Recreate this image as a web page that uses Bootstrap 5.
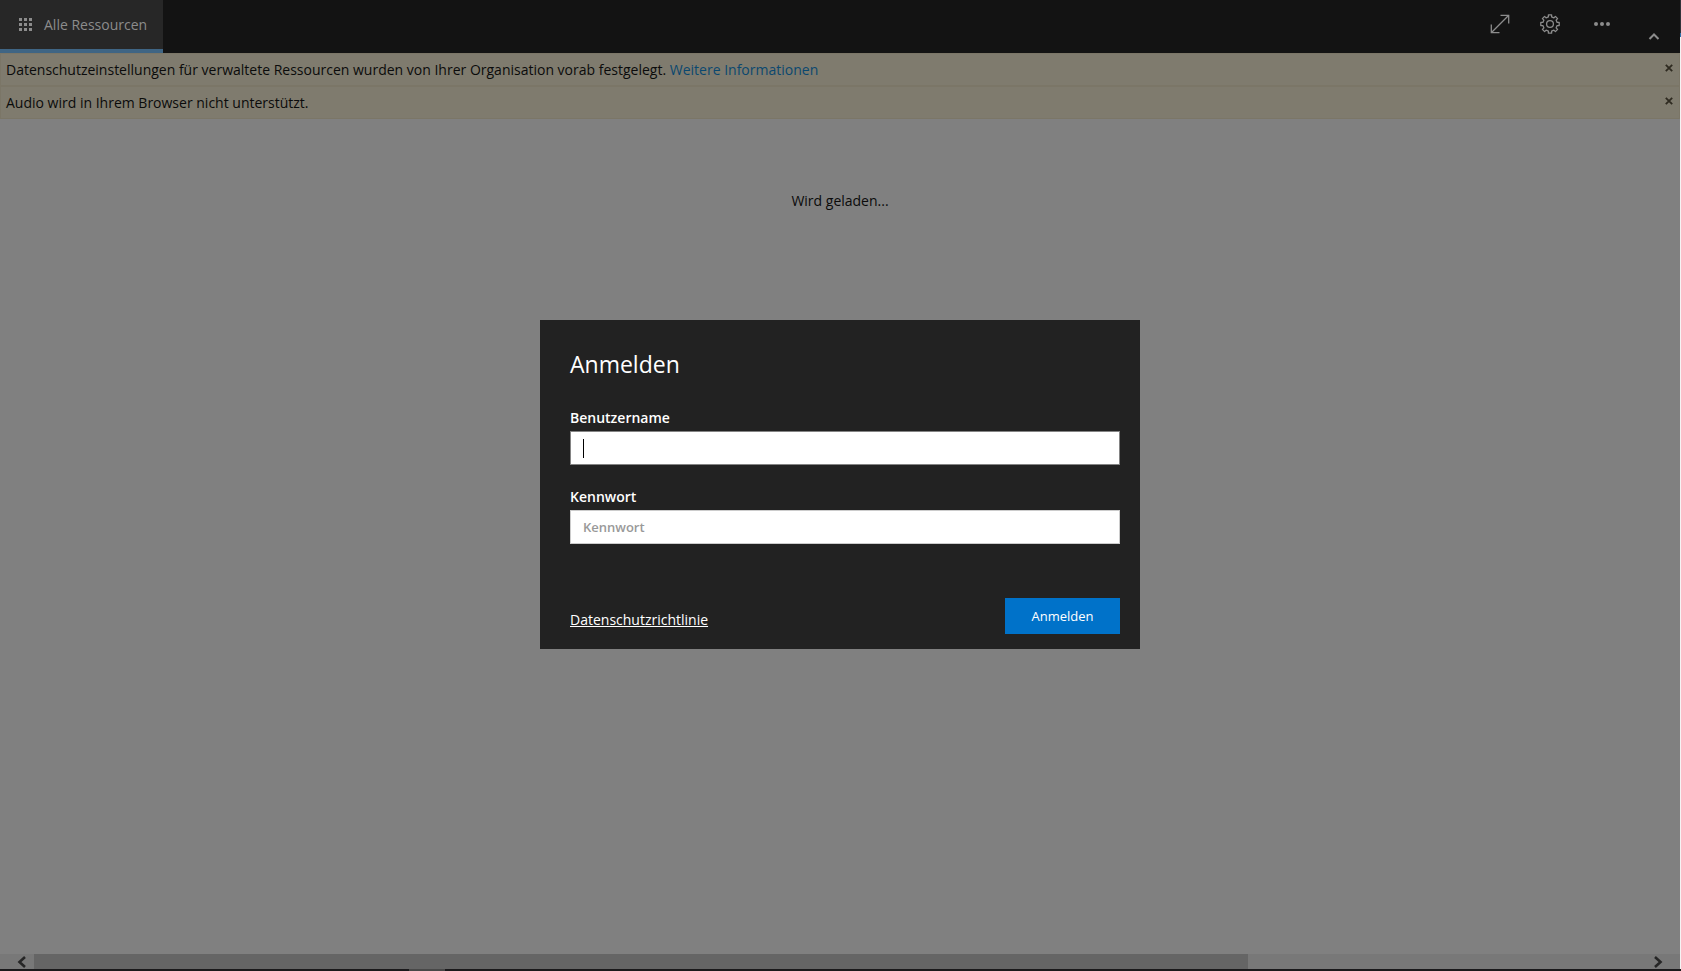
<!DOCTYPE html>
<html lang="de">
<head>
<meta charset="utf-8">
<meta name="viewport" content="width=device-width, initial-scale=1">
<title>Alle Ressourcen</title>
<link href="https://cdn.jsdelivr.net/npm/bootstrap@5.3.0/dist/css/bootstrap.min.css" rel="stylesheet">
<style>
  body { font-family: "Open Sans", "Noto Sans", sans-serif; font-size: 14px; line-height: 20px; color: #0b0b0b; background: #808080; }
  .app-shell { min-height: 100vh; }
  .window-edge { width: 1px; background: linear-gradient(#30343a 33px, #2f6fa8 33px 37px, #f4f4f4 37px); }
  .top-bar { height: 53px; background: #131313; color: #8c8c8c; }
  .top-tab { gap: 12px; padding: 0 16px 0 19px; color: #8c8c8c; background: #272727; border-bottom: 4px solid #3f6584; }
  .tool-btn { padding: 0; border: 0; background: none; color: #8c8c8c; line-height: 0; }
  .tools { gap: 30px; padding: 0 20px 5px 0; }
  .notice { height: 33px; padding: 1px 6px 0 5px; background: #7f7b6e; border: 1px solid #7b7667; border-radius: 0; }
  .notice a { color: #0b486f; text-decoration: none; }
  .notice button { color: #2e2a20; margin-bottom: 4px; }
  .loading { padding-top: 72px; }
  .scroll-track { height: 15px; background: #787878; color: #262626; }
  .scroll-thumb { width: 75.3%; background: #656565; }
  .scroll-end { width: 34px; padding: 0; border: 0; background: none; line-height: 0; color: inherit; text-align: right; }
  .task-edge { height: 2px; background: #1a191b; }
  .task-edge div { width: 36px; margin-left: 409px; background: #484848; }
  .sign-in { width: 600px; padding: 29px 20px 15px 30px; color: #fff; background: #222; border-radius: 0; }
  .sign-in h1 { font-size: 23px; line-height: 30px; margin-bottom: 29px; font-weight: 400; }
  .sign-in label { font-weight: 600; line-height: 20px; margin-bottom: 3px; }
  .field { margin-bottom: 22px; }
  .sign-in .form-control { height: 34px; padding: 0 12px; border-radius: 0; border: 1px solid #ccc; font-size: 13px; font-weight: 600; color: #222; background-color: #fff; }
  .sign-in .form-control::placeholder { color: #999; opacity: 1; }
  .sign-in .field-active { border-color: #848484; background: #fff linear-gradient(#000, #000) 12px center / 1px 19px no-repeat; }
  .sign-in .btn { width: 115px; height: 36px; padding: 2px 0 0; border: 0; border-radius: 0; background: #0072c9; color: #fff; font-size: 13px; }
  .sign-in a { color: #fff; }
  .actions { padding-top: 32px; }
</style>
<script src="https://cdn.jsdelivr.net/npm/bootstrap@5.3.0/dist/js/bootstrap.bundle.min.js"></script>
</head>
<body>
<div class="app-shell d-flex flex-column">
  <div class="d-flex flex-grow-1">
    <div class="flex-grow-1 d-flex flex-column position-relative">
      <header class="top-bar d-flex justify-content-between">
        <a href="#" class="top-tab d-flex align-items-center text-decoration-none">
          <svg width="13" height="13" fill="currentColor" aria-hidden="true"><path d="M0 0h3v3H0zM5 0h3v3H5zM10 0h3v3h-3zM0 5h3v3H0zM5 5h3v3H5zM10 5h3v3h-3zM0 10h3v3H0zM5 10h3v3H5zM10 10h3v3h-3z"/></svg>
          <span>Alle Ressourcen</span>
        </a>
        <div class="tools d-flex align-items-center">
          <button class="tool-btn" type="button" aria-label="Vollbild"><svg width="20" height="20" fill="none" stroke="currentColor" stroke-width="1.3"><path d="M1.500 18.500l17-17M10.500 1.300h8.200v8.200M1.300 10.500v8.200h8.200"/></svg></button>
          <button class="tool-btn" type="button" aria-label="Einstellungen"><svg width="20" height="20" viewBox="0 0 20 20" fill="none" stroke="currentColor" stroke-width="1.3" stroke-linejoin="round"><circle cx="10" cy="10" r="3.400"/><path d="M8.400 2.900V.8h3.200v2.100l2.300 1 1.500-1.500 2.200 2.200-1.500 1.500 1 2.300h2.100v3.200h-2.100l-1 2.300 1.500 1.500-2.200 2.200-1.500-1.500-2.300 1v2.100H8.400v-2.100l-2.300-1-1.500 1.500-2.200-2.200 1.500-1.500-1-2.300H.8V8.400h2.100l1-2.300-1.500-1.500 2.200-2.200 1.500 1.500z"/></svg></button>
          <button class="tool-btn ms-1" type="button" aria-label="Mehr"><svg width="16" height="4" fill="currentColor"><circle cx="2" cy="2" r="2"/><circle cx="8" cy="2" r="2"/><circle cx="14" cy="2" r="2"/></svg></button>
          <button class="tool-btn ms-2 mt-4" type="button" aria-label="Leiste einklappen"><svg width="12" height="8" fill="none" stroke="currentColor" stroke-width="2"><path d="M1.500 7L6 2.500 10.500 7"/></svg></button>
        </div>
      </header>
      <div class="notice d-flex align-items-center justify-content-between" role="alert">
        <span>Datenschutzeinstellungen für verwaltete Ressourcen wurden von Ihrer Organisation vorab festgelegt. <a href="#">Weitere Informationen</a></span>
        <button class="tool-btn" type="button" aria-label="Schließen"><svg width="8" height="8" stroke="currentColor" stroke-width="1.8"><path d="M.8.8l6.400 6.400M7.200.8L.8 7.200"/></svg></button>
      </div>
      <div class="notice d-flex align-items-center justify-content-between" role="alert">
        <span>Audio wird in Ihrem Browser nicht unterstützt.</span>
        <button class="tool-btn" type="button" aria-label="Schließen"><svg width="8" height="8" stroke="currentColor" stroke-width="1.8"><path d="M.8.8l6.400 6.400M7.200.8L.8 7.200"/></svg></button>
      </div>
      <main class="loading flex-grow-1 text-center">Wird geladen...</main>
      <div class="scroll-track d-flex">
        <button class="scroll-end pe-2" type="button" aria-label="Nach links"><svg width="9" height="12" fill="none" stroke="currentColor" stroke-width="2.600"><path d="M8 1L2.500 6 8 11"/></svg></button>
        <div class="flex-grow-1 d-flex"><div class="scroll-thumb"></div></div>
        <button class="scroll-end text-start ps-2" type="button" aria-label="Nach rechts"><svg width="9" height="12" fill="none" stroke="currentColor" stroke-width="2.600"><path d="M1 1l5.500 5L1 11"/></svg></button>
      </div>
      <div class="position-absolute top-0 start-0 w-100 h-100 d-flex align-items-center justify-content-center">
        <form class="sign-in" role="dialog" aria-labelledby="sign-in-title">
          <h1 id="sign-in-title">Anmelden</h1>
          <div class="field">
            <label for="user" class="d-block">Benutzername</label>
            <input id="user" type="text" class="form-control field-active">
          </div>
          <div class="field">
            <label for="pass" class="d-block">Kennwort</label>
            <input id="pass" type="password" class="form-control" placeholder="Kennwort">
          </div>
          <div class="actions d-flex justify-content-between align-items-center">
            <a href="#" class="pt-2">Datenschutzrichtlinie</a>
            <button class="btn btn-primary" type="submit">Anmelden</button>
          </div>
        </form>
      </div>
    </div>
    <div class="window-edge"></div>
  </div>
  <div class="task-edge d-flex"><div></div></div>
</div>
</body>
</html>
